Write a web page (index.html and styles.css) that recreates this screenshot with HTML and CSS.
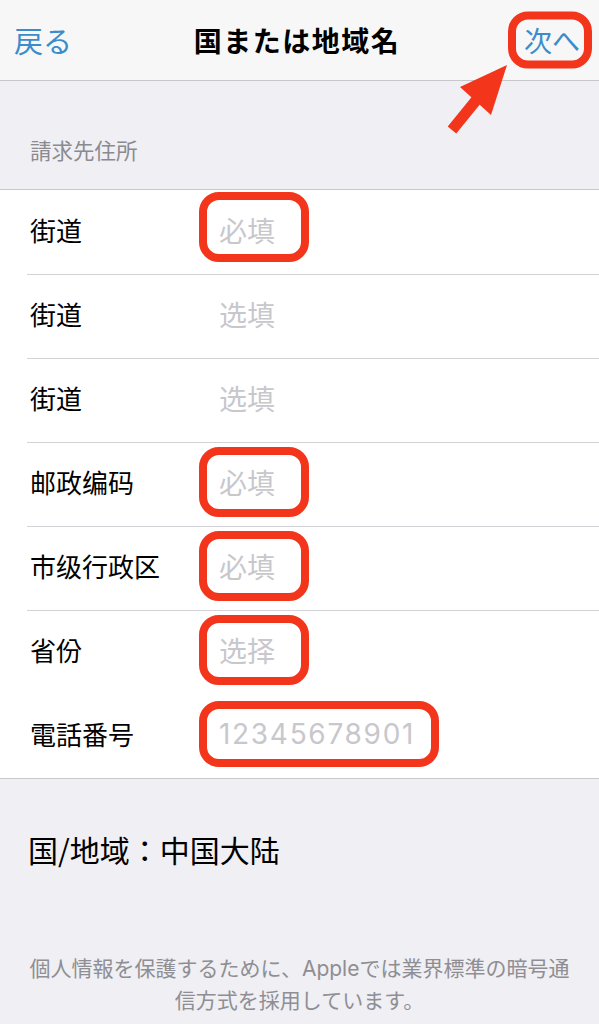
FILE: index.html
```html
<!DOCTYPE html>
<html lang="ja">
<head>
<meta charset="utf-8">
<title>国または地域名</title>
<link rel="stylesheet" href="styles.css">
</head>
<body>
<div class="screen">
  <header class="nav">
    <span class="nav-back">戻る</span>
    <h1 class="nav-title">国または地域名</h1>
    <span class="nav-next"><span class="mark mark-next">次へ</span></span>
  </header>

  <div class="section-head">請求先住所</div>

  <ul class="form">
    <li class="row"><span class="label">街道</span><span class="value mark mark-field mark-up">必填</span></li>
    <li class="row"><span class="label">街道</span><span class="value">选填</span></li>
    <li class="row"><span class="label">街道</span><span class="value">选填</span></li>
    <li class="row"><span class="label">邮政编码</span><span class="value mark mark-field">必填</span></li>
    <li class="row"><span class="label">市级行政区</span><span class="value mark mark-field">必填</span></li>
    <li class="row"><span class="label">省份</span><span class="value mark mark-field">选择</span></li>
    <li class="row no-sep"><span class="label">電話番号</span><span class="value digits mark mark-phone">12345678901</span></li>
  </ul>

  <div class="region">国/地域：中国大陆</div>

  <p class="note">個人情報を保護するために、Appleでは業界標準の暗号通<br>信方式を採用しています。</p>

  <svg class="arrow" width="70" height="80" viewBox="0 0 70 80" aria-hidden="true">
    <line x1="8" y1="76" x2="34" y2="44" stroke="#f2351b" stroke-width="11"/>
    <polygon points="63,11 16,33 47,61" fill="#f2351b"/>
  </svg>
</div>
</body>
</html>
```

FILE: styles.css
```css
*, *::before, *::after { box-sizing: border-box; }

html, body {
  margin: 0;
  padding: 0;
  background: #efeff4;
}

body {
  font-family: "Noto Sans CJK JP", "Noto Sans CJK SC", sans-serif;
  color: #000;
}

.screen {
  position: relative;
  width: 599px;
  min-height: 1024px;
  overflow: hidden;
}

/* Navigation bar */
.nav {
  height: 81px;
  background: #f7f7f8;
  border-bottom: 1px solid #c6c6cb;
  display: grid;
  grid-template-columns: 1fr auto 1fr;
  align-items: center;
  padding: 0 19px 0 14px;
}

.nav-back {
  color: #3b8ccb;
  font-size: 29px;
  line-height: 1;
  justify-self: start;
}

.nav-title {
  margin: 0;
  font-size: 28px;
  font-weight: 700;
  line-height: 1;
  letter-spacing: 1.5px;
}

.nav-next {
  justify-self: end;
  color: #3b8ccb;
  font-size: 28px;
  line-height: 1;
}

/* Red annotation outlines */
.mark {
  position: relative;
  display: inline-block;
}

.mark::after {
  content: "";
  position: absolute;
  border: 8px solid #f2351b;
  border-radius: 20px;
  top: 50%;
  transform: translateY(-50%);
  pointer-events: none;
}

.mark-next::after {
  left: -16px;
  width: 84px;
  height: 57px;
}

.mark-field::after {
  left: -20px;
  width: 110px;
  height: 70px;
}

.mark-up::after {
  transform: translateY(calc(-50% - 3px));
}

.mark-phone::after {
  left: -20px;
  width: 240px;
  height: 66px;
}

/* Section header */
.section-head {
  padding: 54px 0 24px 30px;
  font-size: 21.5px;
  line-height: 30px;
  color: #8a8a8f;
}

/* Form list */
.form {
  list-style: none;
  margin: 0;
  padding: 0;
  background: #fff;
  border-top: 1px solid #c8c7cc;
  border-bottom: 1px solid #c8c7cc;
}

.row {
  height: 84px;
  margin-left: 27px;
  padding: 0 0 5px 3px;
  display: flex;
  align-items: center;
  border-top: 1px solid #d3d2d6;
}

.row:first-child,
.row.no-sep {
  border-top-color: transparent;
}

.label {
  width: 189px;
  flex: none;
  font-size: 26px;
  line-height: 1;
}

.value {
  font-size: 28px;
  line-height: 1;
  color: #c7c7cc;
}

.digits {
  font-family: "Inter", "Noto Sans", sans-serif;
  font-size: 28px;
  letter-spacing: 1.7px;
}

/* Region + note */
.region {
  margin-top: 50px;
  padding-left: 28px;
  font-size: 30px;
  line-height: 40px;
}

.note {
  margin: 84px 0 0;
  text-align: center;
  font-family: "Inter", "Noto Sans CJK JP", sans-serif;
  font-size: 21px;
  line-height: 32px;
  color: #8e8e93;
}

.arrow {
  position: absolute;
  left: 444px;
  top: 54px;
}
```
